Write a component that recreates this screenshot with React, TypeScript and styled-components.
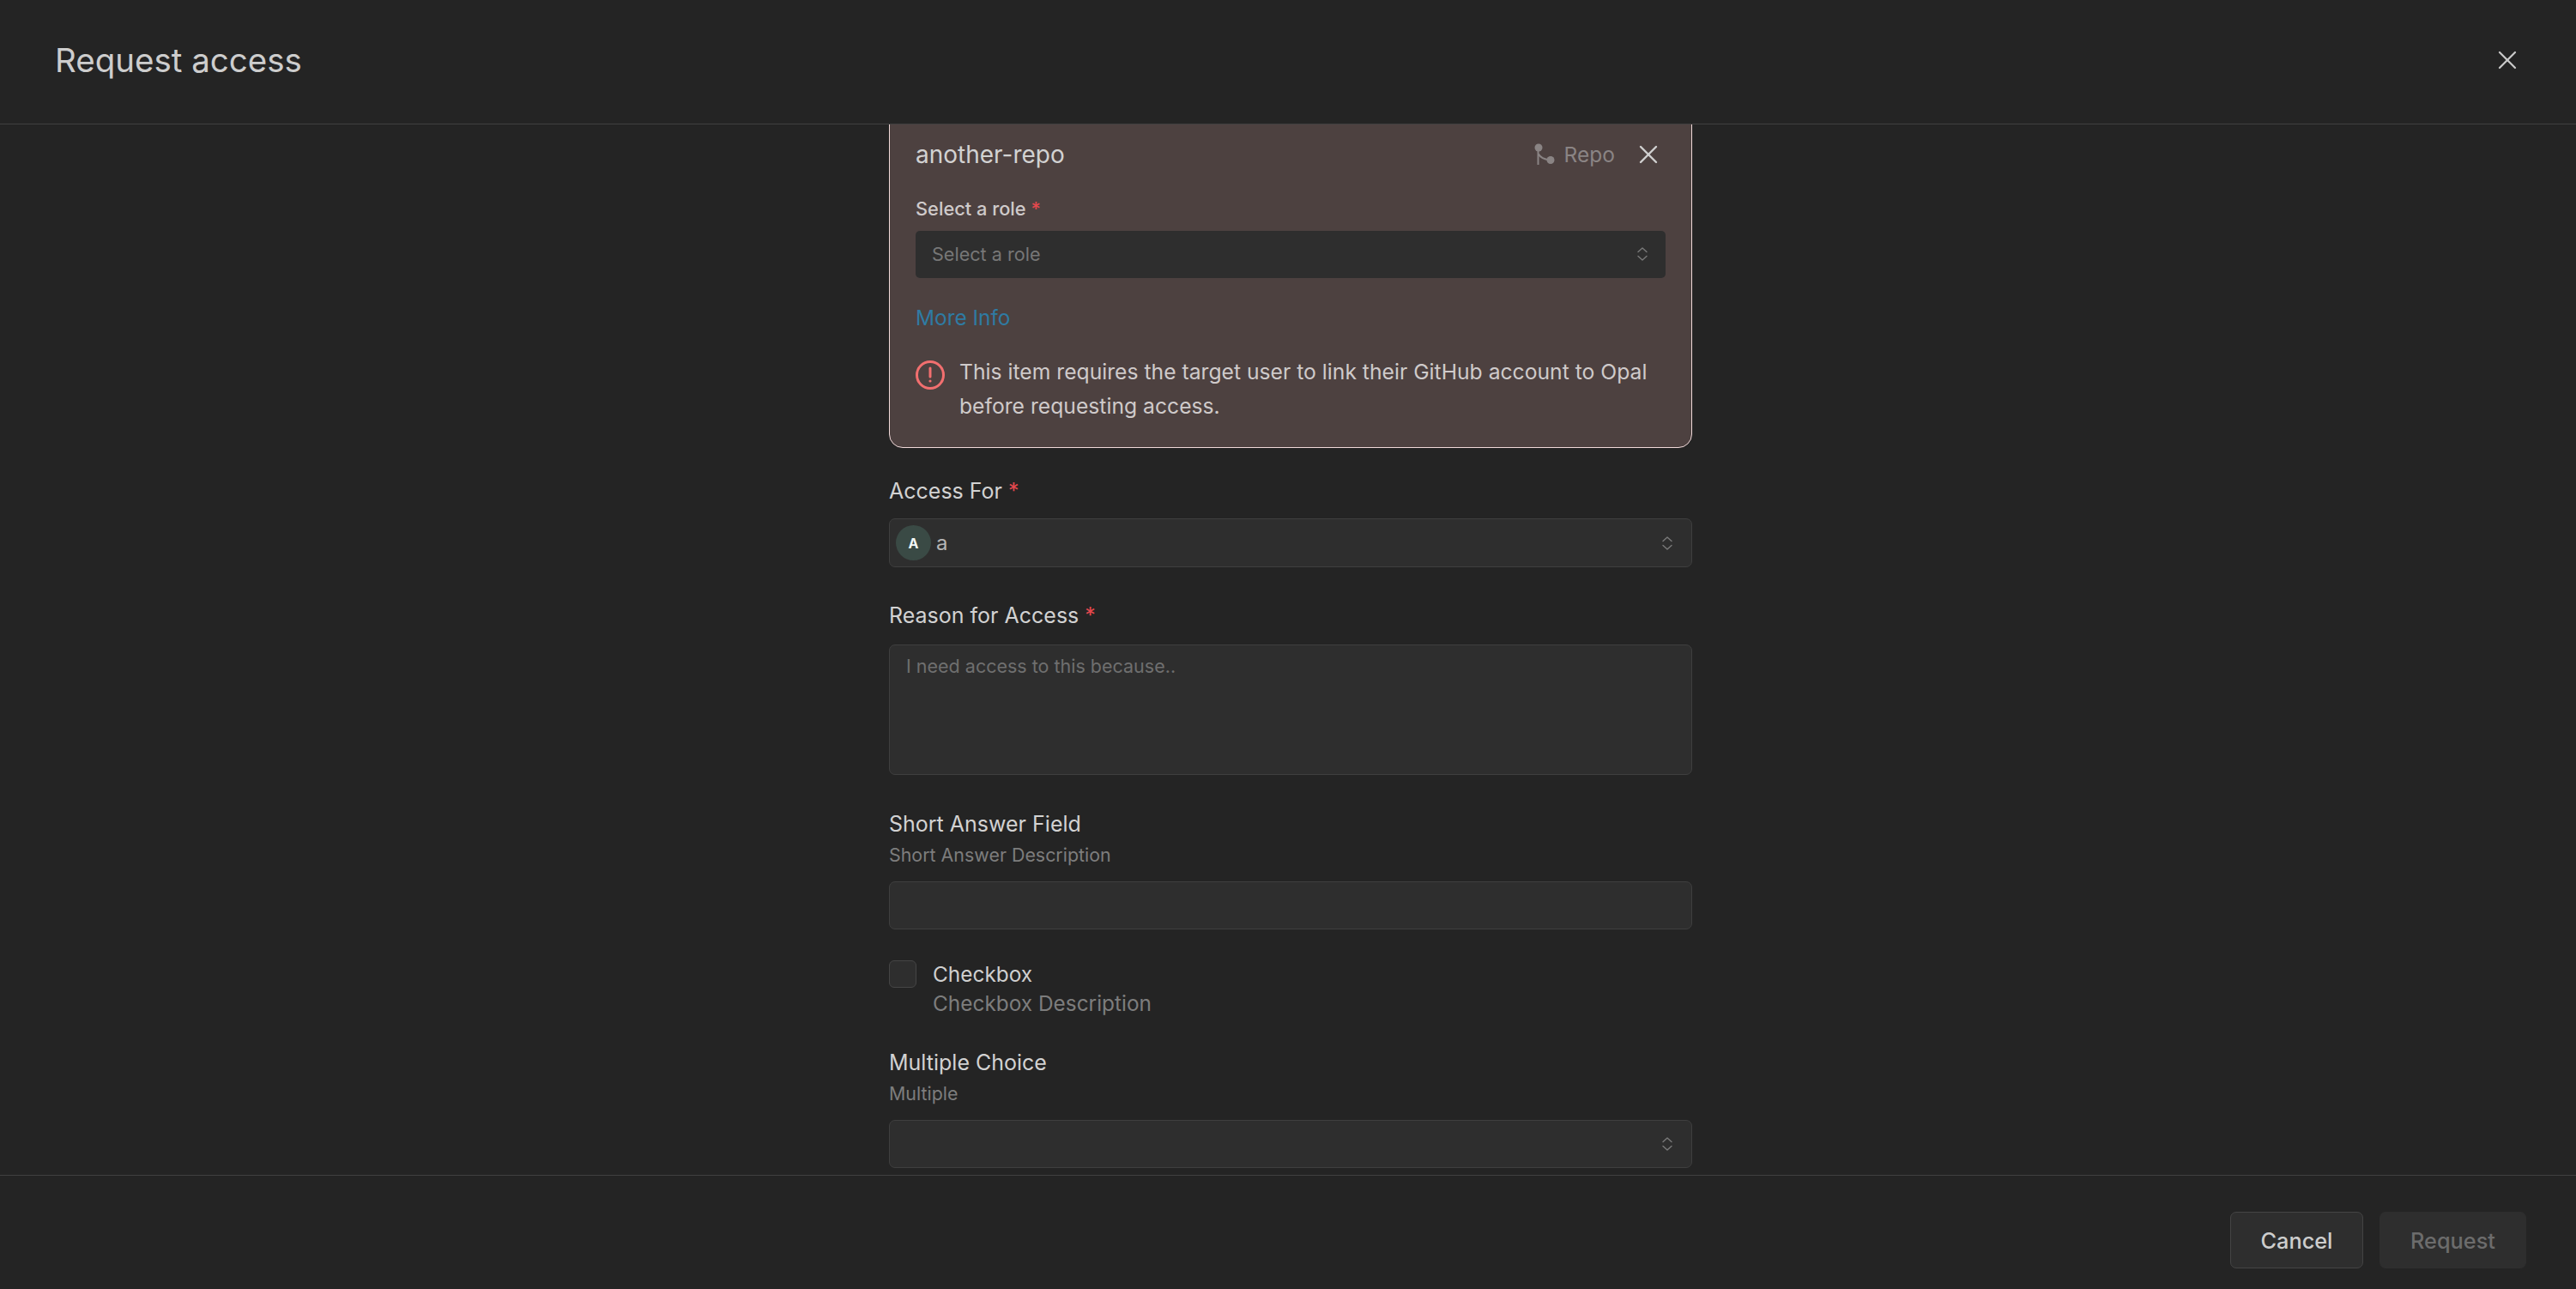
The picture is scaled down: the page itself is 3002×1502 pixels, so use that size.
import React from 'react';
import styled, { createGlobalStyle } from 'styled-components';
import { X } from 'lucide-react';

const GlobalStyle = createGlobalStyle`
  html, body {
    margin: 0;
    padding: 0;
    height: 100%;
    background: #242424;
  }
  * {
    box-sizing: border-box;
  }
  body {
    font-family: Inter, "Noto Sans", sans-serif;
    color: #cfcfcf;
  }
`;

const Page = styled.div`
  width: 3002px;
  height: 1502px;
  display: flex;
  flex-direction: column;
  overflow: hidden;
  background: #242424;
`;

const Header = styled.header`
  flex: 0 0 145px;
  display: flex;
  align-items: center;
  justify-content: space-between;
  padding: 0 62px 5px 64px;
  border-bottom: 1px solid #404040;
`;

const Title = styled.h1`
  margin: 0;
  font-size: 38.5px;
  line-height: 48px;
  font-weight: 400;
  color: #cdcdcd;
`;

const Body = styled.main`
  flex: 1;
  min-height: 0;
  overflow: hidden;
  padding-left: 1036px;
`;

const Column = styled.div`
  width: 936px;
  margin-top: -20px;
`;

const Card = styled.section`
  padding: 26px 30px 28px;
  background: #4d4140;
  border: 1px solid #f0d9d9;
  border-radius: 16px;
`;

const CardHeader = styled.div`
  height: 56px;
  display: flex;
  align-items: center;
  justify-content: space-between;
`;

const CardTitle = styled.div`
  font-size: 28px;
  font-weight: 400;
  color: #d2d2d2;
`;

const CardMeta = styled.div`
  display: flex;
  align-items: center;
  color: #8a8484;
  font-size: 24.5px;
  margin-right: 2px;
`;

const RepoLabel = styled.span`
  margin: 0 21px 0 10px;
`;

const CloseIcon = styled(X)`
  display: block;
  color: ${({ $tone }: { $tone?: string }) => $tone || '#d0d0d0'};
`;

const RoleLabel = styled.div`
  margin-top: 20px;
  font-size: 21.8px;
  line-height: 30px;
  font-weight: 500;
  color: #cfcaca;
`;

const Required = styled.span`
  color: #e5484d;
`;

const RoleSelect = styled.div`
  margin-top: 11px;
  height: 55px;
  display: flex;
  align-items: center;
  justify-content: space-between;
  padding: 0 21px 2px 19px;
  background: #2e2e2e;
  border-radius: 5px;
  font-size: 21.6px;
  color: #777;
`;

const MoreInfo = styled.a`
  display: block;
  margin-top: 30px;
  font-size: 24.4px;
  line-height: 32px;
  color: #2f7ba3;
`;

const Warning = styled.div`
  margin-top: 28px;
  display: flex;
  align-items: flex-start;
  gap: 17px;
  font-size: 24.7px;
  line-height: 39.5px;
  color: #cfcaca;
`;

const WarningIcon = styled.svg`
  flex: 0 0 34px;
  margin-top: 6px;
`;

const FieldLabel = styled.div<{ $top: number }>`
  margin-top: ${({ $top }) => $top}px;
  font-size: 25px;
  line-height: 34px;
  font-weight: 400;
  color: #d2d2d2;
`;

const Description = styled.div`
  margin-top: 5px;
  font-size: 21.4px;
  line-height: 28px;
  color: #7d7d7d;
`;

const Input = styled.div<{ $top: number; $height: number }>`
  margin-top: ${({ $top }) => $top}px;
  height: ${({ $height }) => $height}px;
  display: flex;
  align-items: center;
  justify-content: space-between;
  padding-right: 22px;
  background: #2e2e2e;
  border: 1px solid #3f3f3f;
  border-radius: 7px;
`;

const UserValue = styled.div`
  display: flex;
  align-items: center;
  gap: 6px;
  padding-left: 7px;
  font-size: 24px;
  color: #b5b5b5;
`;

const Avatar = styled.div`
  width: 41px;
  height: 41px;
  display: flex;
  align-items: center;
  justify-content: center;
  border-radius: 50%;
  background: #3a4a45;
  font-size: 16px;
  font-weight: 700;
  color: #f2f7f5;
`;

const Textarea = styled.div`
  margin-top: 17px;
  height: 152px;
  padding: 10px 19px;
  background: #2e2e2e;
  border: 1px solid #3f3f3f;
  border-radius: 7px;
  font-size: 21.5px;
  line-height: 28px;
  color: #6f6f6f;
`;

const CheckRow = styled.div`
  margin-top: 35px;
  display: flex;
  align-items: flex-start;
  gap: 19px;
`;

const CheckBox = styled.div`
  flex: 0 0 32px;
  height: 32px;
  margin-top: 1px;
  background: #2e2e2e;
  border: 1px solid #454545;
  border-radius: 6px;
`;

const CheckText = styled.div`
  font-size: 24.4px;
  line-height: 34px;
  color: #cfcfcf;
`;

const CheckDescription = styled.div`
  color: #7d7d7d;
`;

const Footer = styled.footer`
  flex: 0 0 133px;
  display: flex;
  align-items: flex-start;
  justify-content: flex-end;
  gap: 19px;
  padding: 42px 58px 0 0;
  border-top: 1px solid #404040;
`;

const Button = styled.button<{ $disabled?: boolean }>`
  height: 66px;
  padding: 0;
  width: ${({ $disabled }) => ($disabled ? 171 : 155)}px;
  background: #2e2e2e;
  border: 1px solid ${({ $disabled }) => ($disabled ? '#2e2e2e' : '#444')};
  border-radius: 7px;
  font-family: inherit;
  font-size: 25.3px;
  font-weight: 500;
  color: ${({ $disabled }) => ($disabled ? '#6c6c6c' : '#cdcdcd')};
`;

const Chevrons: React.FC = () => (
  <svg width="12" height="16" viewBox="0 0 12 16" fill="none" stroke="#7a7a7a" strokeWidth="1.4" strokeLinecap="round" strokeLinejoin="round">
    <path d="M1 5.5 6 1l5 4.5" />
    <path d="M1 10.5 6 15l5-4.5" />
  </svg>
);

const RepoIcon: React.FC = () => (
  <svg width="25" height="26" viewBox="0 0 25 26" fill="#8a8484" stroke="#8a8484">
    <circle cx="5" cy="5" r="4.5" stroke="none" />
    <circle cx="19" cy="19.5" r="4.5" stroke="none" />
    <path d="M4.5 7v18M5 12.5c1.5 3 6 6 13 7" fill="none" strokeWidth="2" />
  </svg>
);

const App: React.FC = () => (
  <Page>
    <GlobalStyle />
    <Header>
      <Title>Request access</Title>
      <CloseIcon size={36} strokeWidth={1.5} $tone="#c8c8c8" />
    </Header>
    <Body>
      <Column>
        <Card>
          <CardHeader>
            <CardTitle>another-repo</CardTitle>
            <CardMeta>
              <RepoIcon />
              <RepoLabel>Repo</RepoLabel>
              <CloseIcon size={36} strokeWidth={1.6} />
            </CardMeta>
          </CardHeader>
          <RoleLabel>
            Select a role <Required>*</Required>
          </RoleLabel>
          <RoleSelect>
            Select a role
            <Chevrons />
          </RoleSelect>
          <MoreInfo>More Info</MoreInfo>
          <Warning>
            <WarningIcon width="34" height="34" viewBox="0 0 34 34" fill="none" stroke="#f26f6f">
              <circle cx="17" cy="17" r="15.5" strokeWidth="3" />
              <path d="M17 9v10" strokeWidth="3" strokeLinecap="round" />
              <circle cx="17" cy="24" r="1.6" fill="#f26f6f" stroke="none" />
            </WarningIcon>
            <div>
              This item requires the target user to link their GitHub account to Opal before requesting access.
            </div>
          </Warning>
        </Card>

        <FieldLabel $top={33}>
          Access For <Required>*</Required>
        </FieldLabel>
        <Input $top={15} $height={57}>
          <UserValue>
            <Avatar>A</Avatar>a
          </UserValue>
          <Chevrons />
        </Input>

        <FieldLabel $top={39}>
          Reason for Access <Required>*</Required>
        </FieldLabel>
        <Textarea>I need access to this because..</Textarea>

        <FieldLabel $top={40}>Short Answer Field</FieldLabel>
        <Description>Short Answer Description</Description>
        <Input $top={17} $height={56} />

        <CheckRow>
          <CheckBox />
          <CheckText>
            Checkbox
            <CheckDescription>Checkbox Description</CheckDescription>
          </CheckText>
        </CheckRow>

        <FieldLabel $top={35}>Multiple Choice</FieldLabel>
        <Description>Multiple</Description>
        <Input $top={17} $height={56}>
          <span />
          <Chevrons />
        </Input>
      </Column>
    </Body>
    <Footer>
      <Button>Cancel</Button>
      <Button $disabled>Request</Button>
    </Footer>
  </Page>
);

export default App;
